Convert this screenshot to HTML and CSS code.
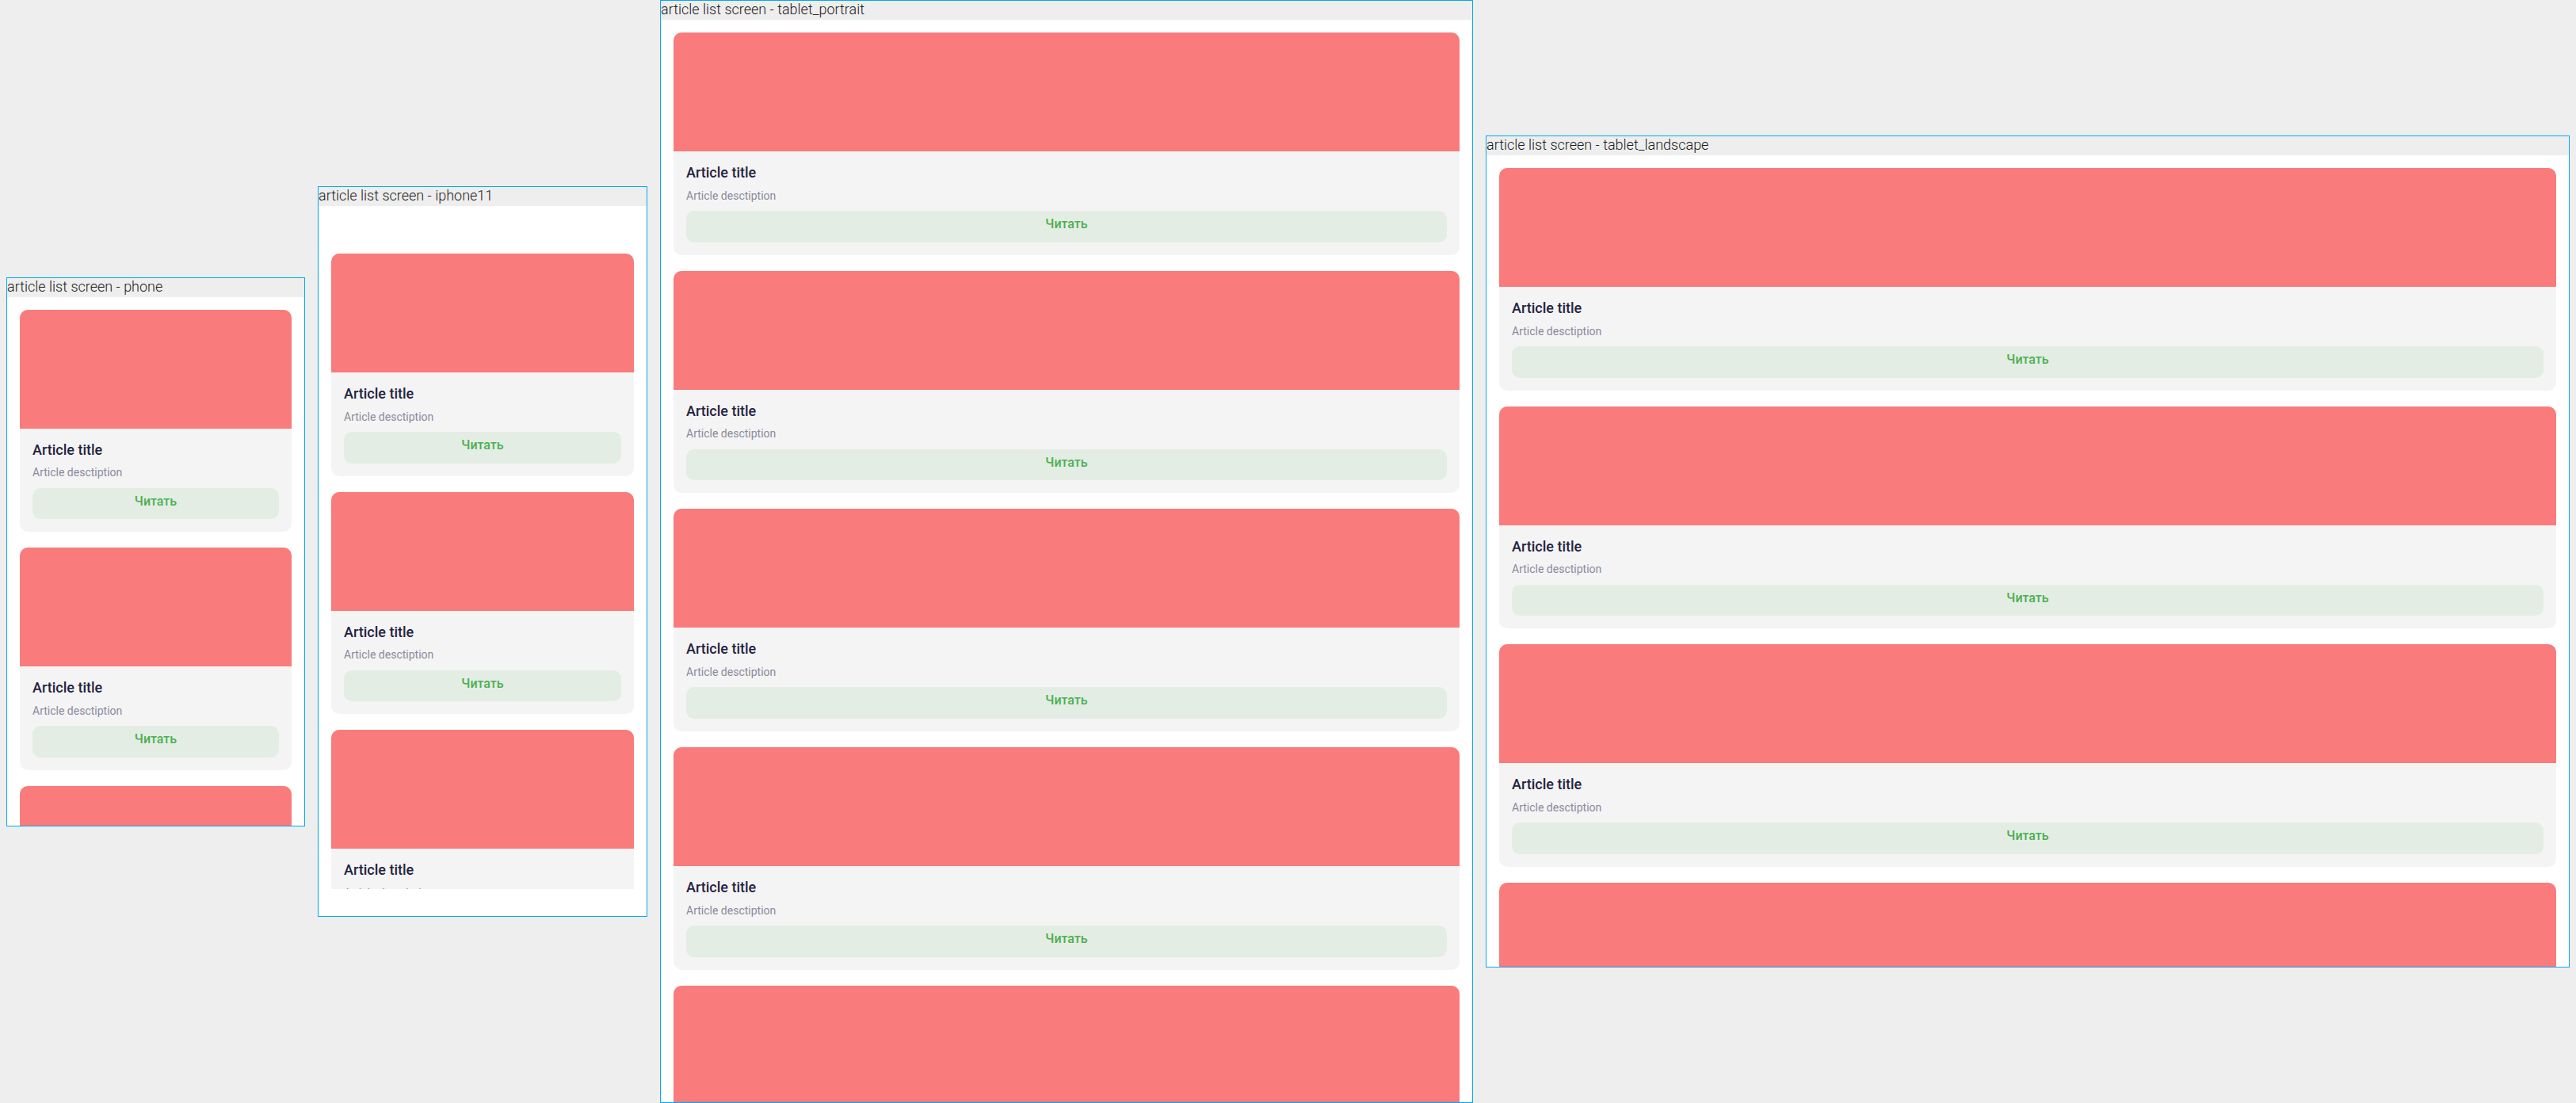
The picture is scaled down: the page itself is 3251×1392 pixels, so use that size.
FILE: index.html
```html
<!DOCTYPE html>
<html lang="ru">
<head>
<meta charset="utf-8">
<title>article list screen</title>
<link rel="stylesheet" href="styles.css">
</head>
<body>
<div class="devices">
  <section class="device">
    <div class="device-label">article list screen - phone</div>
    <div class="screen screen-phone">
      <div class="viewport">
        <div class="list">
          <article class="card"><div class="card-image"></div><div class="card-body"><h2 class="card-title">Article title</h2><p class="card-desc">Article desctiption</p><div class="card-btn">Читать</div></div></article>
          <article class="card"><div class="card-image"></div><div class="card-body"><h2 class="card-title">Article title</h2><p class="card-desc">Article desctiption</p><div class="card-btn">Читать</div></div></article>
          <article class="card"><div class="card-image"></div><div class="card-body"><h2 class="card-title">Article title</h2><p class="card-desc">Article desctiption</p><div class="card-btn">Читать</div></div></article>
        </div>
      </div>
    </div>
  </section>

  <section class="device">
    <div class="device-label">article list screen - iphone11</div>
    <div class="screen screen-iphone">
      <div class="viewport">
        <div class="list">
          <article class="card"><div class="card-image"></div><div class="card-body"><h2 class="card-title">Article title</h2><p class="card-desc">Article desctiption</p><div class="card-btn">Читать</div></div></article>
          <article class="card"><div class="card-image"></div><div class="card-body"><h2 class="card-title">Article title</h2><p class="card-desc">Article desctiption</p><div class="card-btn">Читать</div></div></article>
          <article class="card"><div class="card-image"></div><div class="card-body"><h2 class="card-title">Article title</h2><p class="card-desc">Article desctiption</p><div class="card-btn">Читать</div></div></article>
        </div>
      </div>
    </div>
  </section>

  <section class="device">
    <div class="device-label">article list screen - tablet_portrait</div>
    <div class="screen screen-tablet-portrait">
      <div class="viewport">
        <div class="list">
          <article class="card"><div class="card-image"></div><div class="card-body"><h2 class="card-title">Article title</h2><p class="card-desc">Article desctiption</p><div class="card-btn">Читать</div></div></article>
          <article class="card"><div class="card-image"></div><div class="card-body"><h2 class="card-title">Article title</h2><p class="card-desc">Article desctiption</p><div class="card-btn">Читать</div></div></article>
          <article class="card"><div class="card-image"></div><div class="card-body"><h2 class="card-title">Article title</h2><p class="card-desc">Article desctiption</p><div class="card-btn">Читать</div></div></article>
          <article class="card"><div class="card-image"></div><div class="card-body"><h2 class="card-title">Article title</h2><p class="card-desc">Article desctiption</p><div class="card-btn">Читать</div></div></article>
          <article class="card"><div class="card-image"></div><div class="card-body"><h2 class="card-title">Article title</h2><p class="card-desc">Article desctiption</p><div class="card-btn">Читать</div></div></article>
        </div>
      </div>
    </div>
  </section>

  <section class="device">
    <div class="device-label">article list screen - tablet_landscape</div>
    <div class="screen screen-tablet-landscape">
      <div class="viewport">
        <div class="list">
          <article class="card"><div class="card-image"></div><div class="card-body"><h2 class="card-title">Article title</h2><p class="card-desc">Article desctiption</p><div class="card-btn">Читать</div></div></article>
          <article class="card"><div class="card-image"></div><div class="card-body"><h2 class="card-title">Article title</h2><p class="card-desc">Article desctiption</p><div class="card-btn">Читать</div></div></article>
          <article class="card"><div class="card-image"></div><div class="card-body"><h2 class="card-title">Article title</h2><p class="card-desc">Article desctiption</p><div class="card-btn">Читать</div></div></article>
          <article class="card"><div class="card-image"></div><div class="card-body"><h2 class="card-title">Article title</h2><p class="card-desc">Article desctiption</p><div class="card-btn">Читать</div></div></article>
        </div>
      </div>
    </div>
  </section>
</div>
</body>
</html>
```

FILE: styles.css
```css
* {
  box-sizing: border-box;
}

html, body {
  margin: 0;
  padding: 0;
  background: #eeeeee;
}

body {
  font-family: Roboto, "Noto Sans", "Liberation Sans", sans-serif;
  width: 3251px;
  height: 1392px;
  overflow: hidden;
}

.devices {
  display: flex;
  align-items: center;
  gap: 16px;
  height: 1392px;
  padding-left: 8px;
}

.device {
  flex: none;
  display: flex;
  flex-direction: column;
  border: 1px solid #03a9f4;
  background: #ffffff;
}

.device-label {
  height: 24px;
  background: #eeeeee;
  color: #1a1a1a;
  font-family: Roboto, "Liberation Sans", sans-serif;
  font-size: 18px;
  font-weight: 300;
  line-height: 21.1px;
  white-space: nowrap;
}

.screen {
  background: #ffffff;
  overflow: hidden;
}

.screen-phone {
  width: 375px;
  height: 667px;
}

.screen-iphone {
  width: 414px;
  height: 896px;
  padding: 44px 0 34px;
}

.screen-tablet-portrait {
  width: 1024px;
  height: 1366px;
}

.screen-tablet-landscape {
  width: 1366px;
  height: 1024px;
}

.viewport {
  height: 100%;
  overflow: hidden;
  padding: 16px 16px 0;
}

.list {
  display: flex;
  flex-direction: column;
  gap: 20px;
}

.card {
  flex: none;
  border-radius: 10px;
  overflow: hidden;
  background: #f4f4f4;
}

.card-image {
  height: 150px;
  background: #f97b7b;
}

.card-body {
  padding: 16px;
}

.card-title {
  margin: 0;
  font-size: 18px;
  font-weight: 500;
  line-height: 21px;
  color: #23233f;
}

.card-desc {
  margin: 10.6px 0 0;
  font-size: 14px;
  font-weight: 400;
  line-height: 16.4px;
  color: #8a8a9c;
}

.card-btn {
  margin-top: 11px;
  height: 39.7px;
  padding-top: 8px;
  border-radius: 10px;
  background: #e3ede4;
  color: #4caf50;
  font-size: 16px;
  font-weight: 500;
  line-height: 18.75px;
  text-align: center;
}
```
